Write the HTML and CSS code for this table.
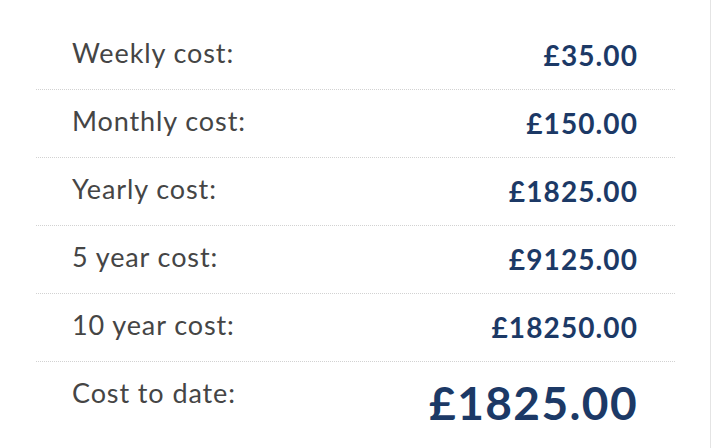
FILE: index.html
```html
<!DOCTYPE html>
<html lang="en">
<head>
<meta charset="utf-8">
<title>Cost summary</title>
<link rel="stylesheet" href="styles.css">
</head>
<body>
<div class="card">
  <ul class="costs">
    <li class="row"><span class="label">Weekly cost:</span><span class="value">£35.00</span></li>
    <li class="row"><span class="label">Monthly cost:</span><span class="value">£150.00</span></li>
    <li class="row"><span class="label">Yearly cost:</span><span class="value">£1825.00</span></li>
    <li class="row"><span class="label">5 year cost:</span><span class="value">£9125.00</span></li>
    <li class="row"><span class="label">10 year cost:</span><span class="value">£18250.00</span></li>
    <li class="row row-total"><span class="label">Cost to date:</span><span class="value value-total">£1825.00</span></li>
  </ul>
</div>
</body>
</html>
```
FILE: styles.css
```css
html, body {
  margin: 0;
  padding: 0;
  background: #ffffff;
}
body {
  font-family: Lato, "Open Sans", sans-serif;
}
.card {
  width: 710px;
  height: 448px;
  border-right: 1px solid #e4e4e4;
  background: #ffffff;
  overflow: hidden;
}
.costs {
  list-style: none;
  margin: 0;
  padding: 22px 35px 0 36px;
}
.row {
  display: flex;
  justify-content: space-between;
  align-items: flex-start;
  box-sizing: border-box;
  height: 68px;
  padding: 15px 37px 0 36px;
  border-bottom: 1px dotted #d2d2d2;
}
.row-total {
  border-bottom: none;
  height: 90px;
}
.label {
  font-size: 27px;
  line-height: 32px;
  letter-spacing: 0.9px;
  color: #454545;
  font-weight: 400;
}
.value {
  font-size: 28px;
  line-height: 32px;
  letter-spacing: 1.1px;
  margin-top: 2px;
  font-weight: 700;
  color: #1c3966;
}
.value-total {
  font-size: 46px;
  line-height: 45px;
  letter-spacing: 1.4px;
  margin-top: 3px;
}
```
